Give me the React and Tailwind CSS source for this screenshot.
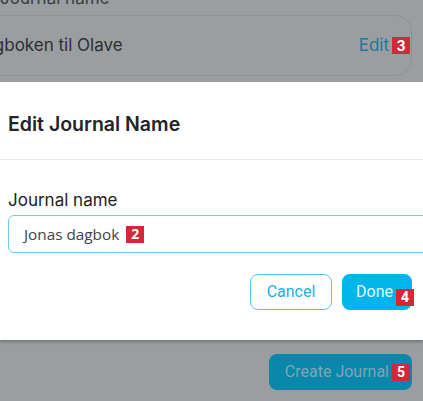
import React from 'react';

const Badge = ({ n }) => (
  <span className="inline-flex h-[17px] w-[18px] items-center justify-center bg-[#d1283a] text-[14px] font-bold leading-none text-white">
    {n}
  </span>
);

const App = () => {
  return (
    <div
      className="relative h-[401px] w-[423px] overflow-hidden bg-[#9a9ea0]"
      style={{ fontFamily: 'Inter, "Noto Sans", sans-serif' }}
    >
      {/* page behind the dialog, dimmed */}
      <div className="flex flex-col">
        <div className="-mt-[14px] h-[20px] text-[17px] text-[#3a3d3f]">Journal name</div>
        <div className="-ml-[38px] mt-[9px] mr-[11px] flex h-[61px] items-center justify-between rounded-[16px] border border-[#8f9294] pl-[9px] pr-[1px]">
          <span className="text-[17px] text-[#2c2f31]">Dagboken til Olave</span>
          <span className="flex items-center gap-[3px]">
            <span className="text-[17px] text-[#1b789b]">Edit</span>
            <Badge n="3" />
          </span>
        </div>
        <div className="mt-[278px] mr-[11px] flex justify-end">
          <button className="flex h-[36px] items-center gap-[3px] rounded-lg bg-[#0a87ab] pl-[16px] pr-[2px] text-[16px] text-[#7ea6b4]" style={{ fontFamily: 'Roboto, sans-serif' }}>
            Create Journal
            <Badge n="5" />
          </button>
        </div>
      </div>

      {/* dialog */}
      <div className="absolute left-0 right-0 top-[82px] h-[258px] bg-white shadow-[0_2px_3px_rgba(0,0,0,0.25)]">
        <div className="flex h-[78px] items-center border-b border-[#e6e6e6] px-2 pt-[8px]">
          <h2 className="text-[19.5px] font-semibold text-[#212529]">Edit Journal Name</h2>
        </div>
        <div className="px-2 pt-[30px]">
          <label className="block text-[17px] leading-[20px] text-[#222]">Journal name</label>
          <div className="mt-[5px] -mr-[20px] flex h-[38px] items-center gap-[7px] rounded-[6px] border border-[#6ccdf0] pl-[15px]" style={{ fontFamily: '"Open Sans", sans-serif' }}>
            <span className="text-[15.3px] text-[#444]">Jonas dagbok</span>
            <Badge n="2" />
          </div>
          <div className="mt-[21px] mr-[3px] flex justify-end gap-[10px]" style={{ fontFamily: 'Roboto, sans-serif' }}>
            <button className="h-[36px] w-[82px] rounded-[8px] border border-[#52c6ee] text-[16px] text-[#18b2e6]">
              Cancel
            </button>
            <button className="relative flex h-[36px] w-[70px] items-center rounded-[8px] bg-[#00b5ec] pl-[14px] text-[16px] text-[#e6f7fd]">
              Done
              <span className="absolute left-[54px] top-[11px]">
                <Badge n="4" />
              </span>
            </button>
          </div>
        </div>
      </div>
    </div>
  );
};

export default App;
